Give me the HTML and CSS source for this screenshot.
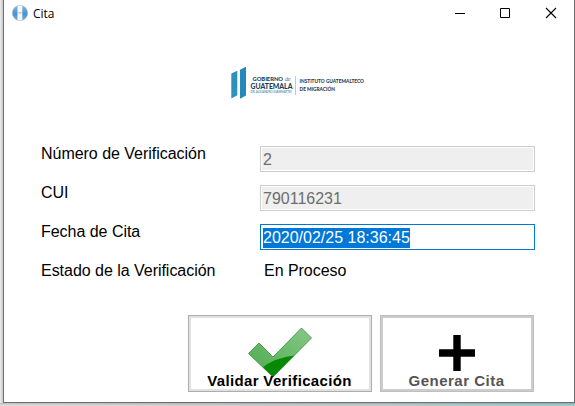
FILE: index.html
```html
<!DOCTYPE html>
<html lang="es">
<head>
<meta charset="utf-8">
<title>Cita</title>
<link rel="stylesheet" href="styles.css">
</head>
<body>
<main class="window">
  <header class="titlebar">
    <svg class="app-icon" width="16" height="16" viewBox="0 0 16 16">
      <defs>
        <clipPath id="disc"><circle cx="8" cy="8" r="7.8"/></clipPath>
        <linearGradient id="sky" x1="0" y1="0" x2="0" y2="1"><stop offset="0" stop-color="#8db9dc"/><stop offset=".55" stop-color="#4593d0"/><stop offset="1" stop-color="#74b2e0"/></linearGradient>
      </defs>
      <g clip-path="url(#disc)">
        <rect width="16" height="16" fill="url(#sky)"/>
        <rect x="5.500" width="4.800" height="16" fill="#f7f7f5"/>
        <path d="M6.500 7.200q1.500 2 3 0" fill="none" stroke="#b5bda3" stroke-width="1.1"/>
      </g>
      <circle cx="8" cy="8" r="7.600" fill="none" stroke="#b5c3cd" stroke-width=".4"/>
    </svg>
    <h1 class="title">Cita</h1>
    <div class="controls">
      <svg width="46" height="26" viewBox="0 0 46 26"><path d="M18 13.500h10" stroke="#000"/></svg>
      <svg width="46" height="26" viewBox="0 0 46 26"><path d="M17.500 8.500h9v9h-9z" fill="none" stroke="#000"/></svg>
      <svg width="46" height="26" viewBox="0 0 46 26"><path d="M17 8l10 10M27 8l-10 10" stroke="#000" stroke-width="1.1"/></svg>
    </div>
  </header>

  <svg class="logo" width="150" height="34" viewBox="230 66 150 34">
    <path d="M231.300 73.500l6-2.700v24.400l-6 3.300z" fill="#2e91bd"/>
    <path d="M240 69.800l6-3v28.800l-6 3.200z" fill="#2589b9"/>
    <text class="logo-gov" x="252.500" y="81" textLength="30.500" lengthAdjust="spacingAndGlyphs">GOBIERNO</text>
    <text class="logo-de" x="285" y="80.500">de</text>
    <text class="logo-name" x="250.500" y="89" textLength="42" lengthAdjust="spacingAndGlyphs">GUATEMALA</text>
    <text class="logo-sub" x="250.500" y="93" textLength="41" lengthAdjust="spacingAndGlyphs">DR. ALEJANDRO GIAMMATTEI</text>
    <path d="M295.500 76v19" stroke="#c4c8cc"/>
    <text class="logo-inst" x="299.500" y="82.800" textLength="64.500" lengthAdjust="spacingAndGlyphs">INSTITUTO GUATEMALTECO</text>
    <text class="logo-inst" x="299.500" y="91" textLength="35.500" lengthAdjust="spacingAndGlyphs">DE MIGRACIÓN</text>
  </svg>

  <section class="form">
    <span class="label">Número de Verificación</span><div class="field disabled"><span>2</span></div>
    <span class="label">CUI</span><div class="field disabled"><span>790116231</span></div>
    <span class="label">Fecha de Cita</span><div class="field focused"><span class="selection">2020/02/25 18:36:45</span></div>
    <span class="label">Estado de la Verificación</span><span class="label status">En Proceso</span>
  </section>

  <footer class="actions">
    <button class="action validate" type="button">
      <svg width="178" height="71" viewBox="191 318 178 71">
        <defs>
          <linearGradient id="leaf" x1="0" y1="1" x2="1" y2="0"><stop offset="0" stop-color="#43a643"/><stop offset="1" stop-color="#8fcd8f"/></linearGradient>
          <clipPath id="tick"><path d="M248.500 353.500L259 343l14 14 28.500-29 10 10-38.500 39z"/></clipPath>
        </defs>
        <g clip-path="url(#tick)">
          <path d="M240 320h80v65h-80z" fill="url(#leaf)"/>
          <path d="M260 369.500q14-12.500 38-14.500v30h-38z" fill="#068a06"/>
        </g>
        <path d="M248.500 353.500L259 343l14 14 28.500-29 10 10-38.500 39z" fill="none" stroke="#388b38" stroke-width=".8"/>
      </svg>
      <span class="caption">Validar Verificación</span>
    </button>
    <button class="action generate" type="button" disabled>
      <svg width="148" height="71" viewBox="383 318 148 71"><path d="M453.300 335h7.400v14.300H475v7.400h-14.300V371h-7.400v-14.300H439v-7.400h14.300z" fill="#000"/></svg>
      <span class="caption">Generar Cita</span>
    </button>
  </footer>
</main>
</body>
</html>
```
FILE: styles.css
```css
* { box-sizing: border-box; }

body {
  margin: 0;
  height: 406px;
  padding-left: 3px;
  overflow: hidden;
  background:
    linear-gradient(rgba(90, 90, 90, .3), rgba(90, 90, 90, 0)) 0 403px / 100% 3px no-repeat,
    linear-gradient(90deg, #e6e6e6 0, #d6d6d6 35%, #c4d3d4 65%, #9fd3d6 100%) 0 403px / 100% 3px no-repeat,
    linear-gradient(90deg, #ececec, #c8c8c8) 0 0 / 3px 100% no-repeat;
  font-family: "Liberation Sans", Arial, sans-serif;
  color: #000;
}

.window {
  width: 572px;
  height: 403px;
  background: #fff;
  border: solid #6c6f70;
  border-width: 0 1px 1px;
  display: flex;
  flex-direction: column;
}

.titlebar {
  height: 30px;
  display: flex;
  align-items: flex-start;
  padding-left: 8px;
}

.app-icon { margin-top: 5px; }

.title {
  margin: 5px 0 0 5px;
  font: 12px/17px "Open Sans", "Noto Sans", sans-serif;
}

.controls {
  display: flex;
  margin-left: auto;
  margin-right: -1px;
}

.logo {
  display: block;
  margin: 36px 0 0 226px;
  overflow: visible;
}

.logo text { font-family: Lato, sans-serif; font-weight: 900; fill: #193f58; }
.logo .logo-gov { font-size: 6.2px; }
.logo .logo-de { font: italic 6px "Liberation Serif", serif; fill: #577184; }
.logo .logo-name { font-size: 8.2px; }
.logo .logo-sub { font-size: 3.2px; fill: #5f9dbd; }
.logo .logo-inst { font-size: 5.6px; fill: #2b3e50; }

.form {
  display: grid;
  grid-template-columns: 219px 275px;
  grid-template-rows: repeat(4, 26px);
  row-gap: 13px;
  margin: 46px 0 0 37px;
  font-size: 16px;
}

.label { line-height: 18px; margin-top: -1px; letter-spacing: -.03px; }
.status { padding-left: 4px; }

.field {
  height: 26px;
  padding: 3px 2px;
  border: 1px solid #ccc;
  line-height: 20px;
}

.disabled {
  padding: 1px;
  background: #efefef content-box;
  color: #6d6d6d;
}

.disabled span { display: block; padding: 2px 1px; }

.focused { border-color: #0078d7; }

.selection {
  display: inline-block;
  height: 20px;
  background: #0078d7;
  color: #fff;
}

.actions {
  display: flex;
  gap: 8px;
  margin: 26px 0 0 184px;
}

.action {
  display: grid;
  height: 77px;
  padding: 0;
  border: 1px solid #adadad;
  background: #fff;
  box-shadow: inset 0 0 0 2px #e1e1e1;
  font: bold 15px/17px "Liberation Sans", Arial, sans-serif;
  letter-spacing: .35px;
  color: #000;
  place-items: center;
}

.action > * { grid-area: 1 / 1; }
.caption { align-self: end; margin: 0 1px 2px 0; white-space: nowrap; }
.validate { width: 184px; }
.generate {
  width: 154px;
  border-color: #bfbfbf;
  box-shadow: inset 0 0 0 2px #ccc;
  letter-spacing: .5px;
  color: #555;
}
```
